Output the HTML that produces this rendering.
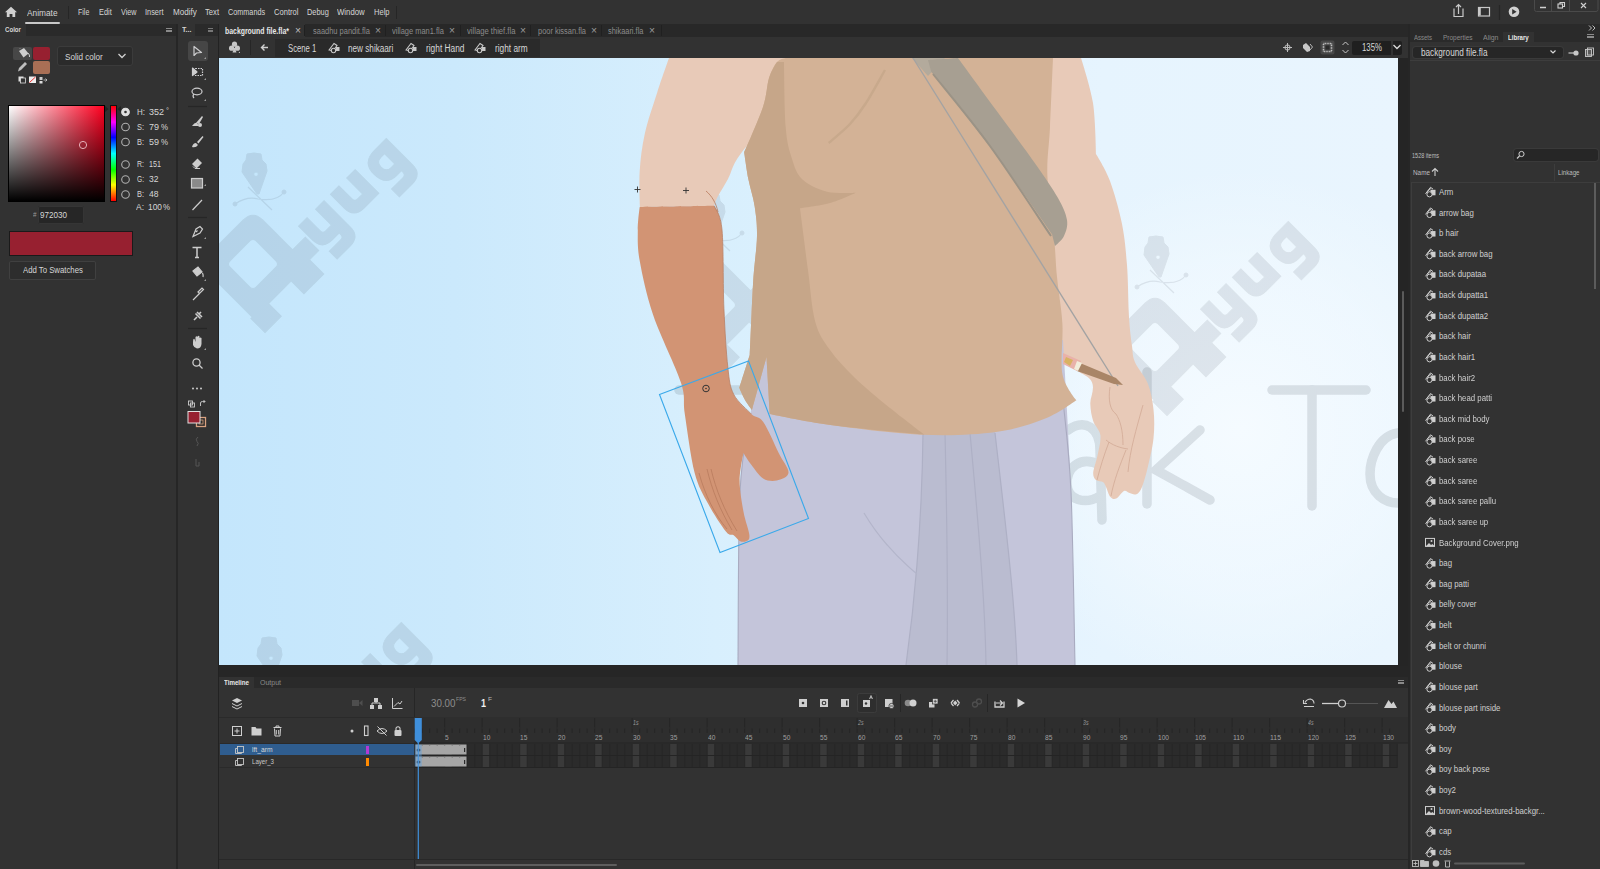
<!DOCTYPE html>
<html><head><meta charset="utf-8">
<style>
html,body{margin:0;padding:0;}
body{width:1600px;height:869px;overflow:hidden;position:relative;background:#323232;font-family:"Liberation Sans",sans-serif;}
.r{position:absolute;}
.t{position:absolute;white-space:nowrap;transform-origin:0 50%;font-family:"Liberation Sans",sans-serif;}
svg{position:absolute;}
</style></head><body>
<div class="r" style="left:0px;top:0px;width:1600px;height:24px;background:#323232;"></div>
<div class="r" style="left:0px;top:24px;width:1600px;height:845px;background:#323232;"></div>
<div class="r" style="left:176px;top:24px;width:2px;height:845px;background:#262626;"></div>
<div class="r" style="left:218px;top:24px;width:1px;height:845px;background:#222;"></div>
<div class="r" style="left:1408px;top:24px;width:2px;height:845px;background:#262626;"></div>
<div class="r" style="left:0px;top:24px;width:176px;height:12px;background:#2a2a2a;"></div>
<div class="r" style="left:0px;top:24px;width:26px;height:12px;background:#323232;"></div>
<div class="r" style="left:178px;top:24px;width:40px;height:12px;background:#2a2a2a;"></div>
<div class="r" style="left:178px;top:24px;width:17px;height:12px;background:#323232;"></div>
<div class="r" style="left:219px;top:24px;width:1189px;height:13px;background:#282828;"></div>
<div class="r" style="left:219px;top:24px;width:86px;height:13px;background:#323232;"></div>
<div class="r" style="left:304px;top:25px;width:1px;height:11px;background:#202020;"></div>
<div class="r" style="left:385px;top:25px;width:1px;height:11px;background:#202020;"></div>
<div class="r" style="left:460px;top:25px;width:1px;height:11px;background:#202020;"></div>
<div class="r" style="left:530px;top:25px;width:1px;height:11px;background:#202020;"></div>
<div class="r" style="left:601px;top:25px;width:1px;height:11px;background:#202020;"></div>
<div class="r" style="left:661px;top:25px;width:1px;height:11px;background:#202020;"></div>
<div class="r" style="left:219px;top:37px;width:1189px;height:21px;background:#323232;"></div>
<div class="r" style="left:275px;top:39px;width:265px;height:18px;background:#2a2a2a;"></div>
<div class="r" style="left:219px;top:58px;width:1189px;height:619px;background:#252525;"></div>
<svg style="left:219px;top:58px" width="1179" height="607" viewBox="219 58 1179 607">
<defs>
<linearGradient id="bg" x1="0" y1="0" x2="1" y2="0">
<stop offset="0" stop-color="#c4e6fc"/>
<stop offset="0.2" stop-color="#cbe9fc"/>
<stop offset="0.42" stop-color="#d8effd"/>
<stop offset="0.75" stop-color="#e6f4fe"/>
<stop offset="1" stop-color="#e9f5fe"/>
</linearGradient>
<radialGradient id="hl" cx="1240" cy="430" r="260" gradientUnits="userSpaceOnUse">
<stop offset="0" stop-color="#f5fbff" stop-opacity="1"/>
<stop offset="0.6" stop-color="#f3faff" stop-opacity="0.6"/>
<stop offset="1" stop-color="#f3faff" stop-opacity="0"/>
</radialGradient>
</defs>
<defs>
<g id="logo">
 <g transform="rotate(-45)">
  <path fill-rule="evenodd" d="M-24 -38 H24 Q38 -38 38 -24 V18 H56 V37 H43 V57 H15 V39 H-17 V57 H-40 V37 H-38 V-24 Q-38 -38 -24 -38 Z M-14 -18.5 H14 Q18.5 -18.5 18.5 -14 V14 Q18.5 18.5 14 18.5 H-14 Q-18.5 18.5 -18.5 14 V-14 Q-18.5 -18.5 -14 -18.5 Z"/>
  <path d="M59 5.5 H71 V24 Q71 28 75 28 H83 V5.5 H95 V43 Q95 56 81 56 H63 V45 H79 Q83 45 83 41 V39 H73 Q59 39 59 25 Z"/>
  <path d="M104 5.5 H116 V24 Q116 28 120 28 H127 V5.5 H139 V39 H118 Q104 39 104 25 Z"/>
  <path fill-rule="evenodd" d="M166 5.5 H183 V43 Q183 56 169 56 H151 V45 H167 Q171 45 171 41 V39 H164 Q149 39 149 22 Q149 5.5 166 5.5 Z M171 15 H166 Q159 15 159 22 Q159 29.5 166 29.5 H171 Z"/>
 </g>
 <path fill-rule="evenodd" d="M-6 -110 Q1 -112 8 -110 L9 -104 L13 -100 L14 -93 L6 -70 H4 L-11 -92 L-10 -100 L-7 -104 Z M3 -92 A2.2 2.2 0 1 0 3.01 -92 Z"/>
 <path fill="none" stroke-width="1.2" d="M-18 -60 Q-6 -68 5 -65 Q24 -62 31 -72 M-5 -77 L19 -54"/>
 <circle cx="-18" cy="-60" r="2"/><circle cx="31" cy="-72" r="2"/>
</g>
</defs>
<rect x="219" y="58" width="1179" height="607" fill="url(#bg)"/>
<rect x="219" y="58" width="1179" height="607" fill="url(#hl)"/>
<g fill="#3c4650" stroke="#3c4650" opacity="0.11">
<use href="#logo" transform="translate(253,264)"/>
<use href="#logo" transform="translate(711,305)"/>
<use href="#logo" transform="translate(1155,347)"/>
<use href="#logo" transform="translate(268,748)"/>
</g>
<g fill="none" stroke="#3c4650" stroke-width="9.5" stroke-linecap="round" opacity="0.14">
  <path d="M1272 390 L1366 390"/>
  <path d="M679 390 L770 390"/>
  <path d="M716 390 L716 506"/>
  <path d="M1312 390 L1312 506"/>
  <path d="M1147 372 L1147 504"/>
  <path d="M1200 430 L1156 470 L1210 500"/>
  <path d="M1398 433 C1378 436 1370 460 1370 474 C1370 494 1385 503 1398 503"/>
  <path d="M1068 430 C1085 418 1100 428 1100 450 L1102 520 M1100 465 C1080 455 1066 468 1067 485 C1068 500 1085 505 1100 496"/>
</g>
<path fill="#e8cab8"  d="M1040.0 58.0 C1040.0 58.0 1081.0 58.0 1081.0 58.0 C1081.0 58.0 1090.5 87.0 1093.0 103.0 C1095.5 119.0 1096.0 154.0 1096.0 154.0 C1096.0 154.0 1105.7 169.3 1110.0 181.0 C1114.3 192.7 1119.2 210.0 1122.0 224.0 C1124.8 238.0 1125.8 249.5 1127.0 265.0 C1128.2 280.5 1128.2 303.5 1129.0 317.0 C1129.8 330.5 1131.0 338.5 1132.0 346.0 C1133.0 353.5 1132.3 355.7 1134.9 362.0 C1137.5 368.3 1144.7 375.7 1147.8 383.6 C1150.9 391.5 1152.5 400.4 1153.5 409.5 C1154.5 418.6 1154.5 428.6 1153.5 438.2 C1152.5 447.8 1149.7 458.9 1147.8 467.0 C1145.9 475.1 1143.9 482.4 1142.0 487.0 C1140.1 491.6 1138.5 493.3 1136.3 494.3 C1134.1 495.3 1131.0 493.4 1129.0 492.8 C1127.0 492.2 1126.1 490.0 1124.0 491.0 C1121.9 492.0 1118.5 497.6 1116.2 498.6 C1113.9 499.6 1112.1 498.9 1110.4 497.0 C1108.7 495.1 1107.2 489.5 1106.0 487.0 C1104.8 484.5 1104.7 483.2 1103.0 482.0 C1101.3 480.8 1097.6 481.6 1096.0 480.0 C1094.4 478.4 1093.0 476.8 1093.2 472.7 C1093.5 468.6 1096.3 461.7 1097.5 455.5 C1098.7 449.3 1101.1 441.1 1100.4 435.3 C1099.7 429.6 1094.9 426.3 1093.2 421.0 C1091.5 415.7 1090.6 410.4 1090.3 403.7 C1090.0 397.0 1095.8 388.6 1091.2 380.7 C1086.7 372.8 1068.5 371.1 1063.0 356.0 C1057.5 340.9 1061.8 307.7 1058.0 290.0 C1054.2 272.3 1040.0 250.0 1040.0 250.0 C1040.0 250.0 1040.0 58.0 1040.0 58.0 Z"/>
<path fill="#e8cab8"  d="M669.0 58.0 C669.0 58.0 800.0 58.0 800.0 58.0 C800.0 58.0 790.0 100.0 790.0 100.0 C790.0 100.0 752.3 138.8 742.0 152.0 C731.7 165.2 732.2 171.3 728.0 179.0 C723.8 186.7 719.3 193.5 717.0 198.0 C714.7 202.5 714.0 206.0 714.0 206.0 C714.0 206.0 640.0 207.0 640.0 207.0 C640.0 207.0 638.9 183.2 639.7 171.0 C640.5 158.8 641.9 146.8 644.8 133.7 C647.7 120.6 653.3 104.9 657.3 92.3 C661.3 79.7 669.0 58.0 669.0 58.0 Z"/>
<path fill="#c4c5da"  d="M767.0 340.0 C767.0 340.0 1063.0 340.0 1063.0 340.0 C1063.0 340.0 1069.0 437.8 1071.0 492.0 C1073.0 546.2 1075.0 665.0 1075.0 665.0 C1075.0 665.0 738.0 665.0 738.0 665.0 C738.0 665.0 738.0 533.5 740.0 492.0 C742.0 450.5 745.5 441.3 750.0 416.0 C754.5 390.7 767.0 340.0 767.0 340.0 Z"/>
<path fill="none" stroke="#a9abc0" stroke-width="1.1"  d="M750.0 416.0 C748.3 428.7 742.0 450.5 740.0 492.0 C738.0 533.5 738.3 636.2 738.0 665.0"/>
<path fill="none" stroke="#a9abc0" stroke-width="1.1"  d="M1063.0 400.0 C1064.3 415.3 1069.0 447.8 1071.0 492.0 C1073.0 536.2 1074.3 636.2 1075.0 665.0"/>
<path fill="#babcd0" d="M923 433 C922 520 915 600 906 665 L1017 665 C1015 600 1005 520 995 432 Z"/>
<g fill="none" stroke="#aeb0c5" stroke-width="1.2">
<path d="M923 433 C922 520 915 600 906 665"/>
<path d="M945 433 C947 520 948 600 947 665"/>
<path d="M970 433 C978 520 985 600 986 665"/>
<path d="M995 433 C1005 520 1015 600 1017 665"/>
<path d="M864 513 C880 540 900 560 917 574" stroke="#b3b5ca"/>
</g>
<path fill="#d3b296"  d="M786.0 58.0 C786.0 58.0 1053.0 58.0 1053.0 58.0 C1053.0 58.0 1050.9 107.3 1050.0 127.0 C1049.1 146.7 1046.7 157.8 1047.4 176.0 C1048.1 194.2 1052.4 219.2 1054.0 236.0 C1055.6 252.8 1055.6 262.3 1057.0 277.0 C1058.4 291.7 1061.5 307.8 1062.4 324.0 C1063.3 340.2 1060.1 361.3 1062.4 374.0 C1064.7 386.7 1076.3 400.2 1076.3 400.2 C1076.3 400.2 1059.3 412.9 1045.9 418.2 C1032.5 423.5 1016.7 429.2 996.0 432.0 C975.3 434.8 949.2 435.9 921.6 434.7 C894.0 433.5 855.8 428.4 830.5 425.0 C805.2 421.6 769.7 414.0 769.7 414.0 C769.7 414.0 766.5 357.0 766.5 357.0 C766.5 357.0 752.0 410.0 752.0 410.0 C752.0 410.0 747.1 403.7 745.0 400.0 C742.9 396.3 739.3 387.8 739.3 387.8 C739.3 387.8 749.8 354.7 749.8 354.7 C749.8 354.7 751.9 302.6 753.1 282.8 C754.3 263.0 756.8 248.8 757.0 236.0 C757.2 223.2 756.0 215.5 754.6 206.0 C753.2 196.5 750.1 188.1 748.4 179.2 C746.7 170.2 744.2 152.3 744.2 152.3 C744.2 152.3 758.9 119.4 763.0 107.0 C767.1 94.6 766.7 85.5 769.0 78.0 C771.3 70.5 774.2 65.3 777.0 62.0 C779.8 58.7 786.0 58.0 786.0 58.0 Z"/>
<path fill="#c6a689"  d="M777.0 62.0 C777.0 62.0 784.0 62.0 784.0 62.0 C784.0 62.0 784.4 111.4 785.7 127.5 C787.0 143.6 789.1 149.9 791.9 158.5 C794.6 167.1 796.4 173.7 802.2 179.2 C808.1 184.7 818.0 189.4 827.0 191.7 C836.0 193.9 856.0 192.7 856.0 192.7 C856.0 192.7 839.3 200.4 830.0 203.0 C820.7 205.6 800.0 208.3 800.0 208.3 C800.0 208.3 805.5 251.1 808.0 270.0 C810.5 288.9 811.6 308.7 815.3 322.0 C819.0 335.3 823.4 340.7 830.0 350.0 C836.6 359.3 845.0 368.3 855.0 378.0 C865.0 387.7 878.4 398.6 890.0 408.0 C901.6 417.4 924.4 434.7 924.4 434.7 C924.4 434.7 856.3 428.4 830.5 425.0 C804.7 421.6 769.7 414.0 769.7 414.0 C769.7 414.0 766.5 357.0 766.5 357.0 C766.5 357.0 752.0 410.0 752.0 410.0 C752.0 410.0 747.1 403.7 745.0 400.0 C742.9 396.3 739.3 387.8 739.3 387.8 C739.3 387.8 749.8 354.7 749.8 354.7 C749.8 354.7 751.9 302.6 753.1 282.8 C754.3 263.0 756.8 248.8 757.0 236.0 C757.2 223.2 756.0 215.5 754.6 206.0 C753.2 196.5 750.1 188.1 748.4 179.2 C746.7 170.2 744.2 152.3 744.2 152.3 C744.2 152.3 758.9 119.4 763.0 107.0 C767.1 94.6 766.7 85.5 769.0 78.0 C771.3 70.5 777.0 62.0 777.0 62.0 Z"/>
<path fill="none" stroke="#c8a98c" stroke-width="2.4"  d="M828.7 143.0 C832.2 139.8 843.8 130.7 850.0 124.0 C856.2 117.3 860.2 112.0 866.0 103.0 C871.8 94.0 881.8 75.5 885.0 70.0"/>
<path fill="#b3aa9c" d="M912 58 L945 58 L928 76 Z"/>
<path fill="#a79f92"  d="M928.0 60.0 C928.0 60.0 958.0 58.0 958.0 58.0 C958.0 58.0 983.1 92.4 996.0 110.0 C1008.9 127.6 1025.0 149.0 1035.3 163.7 C1045.6 178.4 1052.7 188.6 1058.0 198.0 C1063.3 207.4 1066.0 213.7 1067.0 220.0 C1068.0 226.3 1066.0 231.7 1064.0 236.0 C1062.0 240.3 1055.0 246.0 1055.0 246.0 C1055.0 246.0 1052.0 234.0 1052.0 234.0 C1052.0 234.0 1015.3 181.0 1000.0 160.0 C984.7 139.0 971.4 122.7 960.0 108.0 C948.6 93.3 931.4 72.0 931.4 72.0 C931.4 72.0 928.0 60.0 928.0 60.0 Z"/>
<path fill="none" stroke="#9b9386" stroke-width="2"  d="M933.0 74.0 C942.5 86.0 970.3 119.0 990.0 146.0 C1009.7 173.0 1040.8 221.0 1051.0 236.0"/>
<path fill="none" stroke="#a3a3a3" stroke-width="1.4" d="M913 58 L1118 386"/>
<path fill="#a98567" d="M1080 363 L1116 378 L1123 385 L1114 384 L1077 371 Z"/>
<path fill="#e9b2aa" d="M1063 353 L1081 361 L1077 371 L1063 364 Z"/>
<path fill="#d9b262" d="M1066 357 L1073 360 L1070 366 L1064 362 Z"/>
<path fill="#f2eddb" d="M1077 361 L1082 363 L1078 371 L1074 369 Z"/>
<g fill="none" stroke="#d2aa95" stroke-width="0.8">
<path d="M1110 387 C1108 400 1110 410 1116 414 C1120 420 1123 430 1123 445"/>
<path d="M1143 405 C1136 430 1130 450 1128 472"/>
<path d="M1109 442 C1104 455 1100 468 1097 480"/>
<path d="M1126 450 C1120 465 1114 480 1111 496"/>
<path d="M1106 440 C1112 445 1120 448 1128 449"/>
</g>
<path fill="#d29474"  d="M639.7 207.0 C639.7 207.0 714.2 205.8 714.2 205.8 C714.2 205.8 720.4 212.9 722.0 230.0 C723.6 247.1 722.9 285.5 723.9 308.3 C724.9 331.1 726.2 352.6 727.8 367.0 C729.4 381.4 729.8 386.6 733.7 394.4 C737.6 402.2 746.4 409.4 751.3 414.0 C756.2 418.6 758.5 415.3 763.1 421.8 C767.7 428.3 774.5 444.5 778.7 453.0 C782.9 461.5 788.8 468.1 788.5 472.7 C788.2 477.3 781.0 479.5 776.8 480.5 C772.6 481.5 767.4 481.1 763.1 478.5 C758.9 475.9 754.6 469.1 751.3 464.8 C748.0 460.6 743.5 453.0 743.5 453.0 C743.5 453.0 739.6 470.7 739.6 480.5 C739.6 490.3 741.9 502.7 743.5 511.8 C745.1 520.9 749.0 530.4 749.4 535.3 C749.8 540.2 747.6 540.2 746.0 541.2 C744.4 542.2 741.6 542.0 739.6 541.0 C737.6 540.0 736.0 536.9 733.7 535.3 C731.4 533.7 730.1 536.6 725.9 531.4 C721.7 526.2 713.5 513.8 708.3 504.0 C703.1 494.2 698.5 487.7 694.6 472.7 C690.7 457.7 687.1 429.0 684.8 414.0 C682.5 399.0 686.1 398.9 680.9 382.6 C675.7 366.3 660.4 336.3 653.5 316.1 C646.6 295.9 642.4 275.7 639.8 261.3 C637.2 247.0 637.8 239.1 637.8 230.0 C637.8 220.9 639.7 207.0 639.7 207.0 Z"/>
<g fill="none" stroke="#b97b5d" stroke-width="0.8">
<path d="M699 473 C705 495 715 515 727 529"/>
<path d="M707 469 C712 490 720 510 732 530"/>
<path d="M711 469 C716 490 724 510 737 531"/>
<path d="M706 191 C712 196 716 203 718 212"/>
</g>
<path fill="none" stroke="#b98064" stroke-width="0.8"  d="M714.2 206.0 C715.5 210.0 720.4 212.9 722.0 230.0 C723.6 247.1 722.9 285.5 723.9 308.3 C724.9 331.1 726.2 352.6 727.8 367.0 C729.4 381.4 729.8 386.6 733.7 394.4 C737.6 402.2 748.4 410.7 751.3 414.0"/>
<path fill="none" stroke="#3aa9ea" stroke-width="1.1" d="M659.5 394.5 L748.5 361 L808.5 518.5 L720 552.5 Z"/>
<circle cx="706" cy="388.5" r="3.3" fill="none" stroke="#333" stroke-width="1"/><circle cx="706" cy="388.5" r="0.8" fill="#333"/>
<g stroke="#333" stroke-width="0.9"><path d="M634.5 189.5 H640.5 M637.5 186.5 V192.5"/><path d="M683 190.5 H689 M686 187.5 V193.5"/></g>
</svg>
<div class="r" style="left:1402px;top:291px;width:2px;height:121px;background:#5a5a5a;border-radius:1px"></div>
<div class="r" style="left:566px;top:668px;width:315px;height:2px;background:#5a5a5a;border-radius:1px"></div>
<div class="r" style="left:219px;top:666px;width:1189px;height:11px;background:#262626;"></div>
<div class="r" style="left:219px;top:677px;width:1189px;height:11px;background:#2a2a2a;"></div>
<div class="r" style="left:219px;top:677px;width:35px;height:11px;background:#323232;"></div>
<div class="r" style="left:219px;top:688px;width:1189px;height:181px;background:#323232;"></div>
<div class="r" style="left:219px;top:717px;width:1189px;height:1px;background:#2a2a2a;"></div>
<div class="r" style="left:414px;top:688px;width:1px;height:181px;background:#262626;"></div>
<div class="r" style="left:1410px;top:24px;width:190px;height:8px;background:#2a2a2a;"></div>
<div class="r" style="left:1410px;top:32px;width:190px;height:10px;background:#2a2a2a;"></div>
<div class="r" style="left:1503px;top:32px;width:31px;height:10px;background:#323232;"></div>
<div class="r" style="left:1410px;top:60px;width:190px;height:1px;background:#3d3d3d;"></div>
<div class="r" style="left:25px;top:22px;width:35px;height:2px;background:#c8c8c8;border-radius:1px"></div>
<div class="r" style="left:68px;top:6px;width:1px;height:13px;background:#262626;"></div>
<div class="r" style="left:396px;top:6px;width:1px;height:13px;background:#262626;"></div>
<div class="r" style="left:1352px;top:40.6px;width:39px;height:14.6px;background:#1f1f1f;border-radius:2px 0 0 2px"></div>
<div class="r" style="left:1393px;top:40.6px;width:9px;height:14.6px;background:#1f1f1f;border-radius:0 2px 2px 0"></div>
<div class="r" style="left:1412.5px;top:46.5px;width:150.5px;height:11.5px;background:#262626;border-radius:3px;box-shadow:0 0 0 1px #3a3a3a"></div>
<div class="r" style="left:1513.5px;top:149px;width:84px;height:11.7px;background:#262626;border-radius:3px;box-shadow:0 0 0 1px #3a3a3a"></div>
<div class="r" style="left:1554px;top:164px;width:1px;height:17px;background:#3d3d3d;"></div>
<div class="r" style="left:1411px;top:181.5px;width:189px;height:1px;background:#3d3d3d;"></div>
<div class="r" style="left:1411px;top:181.5px;width:1px;height:680px;background:#3d3d3d;"></div>
<div class="r" style="left:1593.5px;top:183px;width:2px;height:106px;background:#5c5c5c;"></div>
<svg style="left:0;top:0" width="1600" height="24" viewBox="0 0 1600 24">
<path fill="#d0d0d0" d="M11 6.8 L17 12.2 H15.2 V17 H12.4 V14 H9.6 V17 H6.8 V12.2 H5 Z"/>
<g fill="none" stroke="#c8c8c8" stroke-width="1.2">
<path d="M1454 8.5 V16.5 H1463 V8.5 M1458.5 14 V5 M1456 7 L1458.5 4.5 L1461 7"/>
<rect x="1478.5" y="7.5" width="11" height="8.5"/>
<path d="M1499.5 5 V20" stroke="#262626"/>
</g>
<rect x="1479" y="8" width="1.8" height="7.5" fill="#c8c8c8"/>
<circle cx="1514" cy="11.8" r="5.3" fill="#d0d0d0"/>
<path d="M1512.2 9 L1516.6 11.8 L1512.2 14.6 Z" fill="#323232"/>
<g fill="none" stroke="#4a4a4a" stroke-width="1"><path d="M1534.5 0 V9.5 Q1534.5 11.5 1536.5 11.5 H1596 Q1598 11.5 1598 9.5 V0 M1551.5 0 V11.5 M1569.5 0 V11.5"/></g>
<g fill="none" stroke="#d0d0d0" stroke-width="1.1">
<path d="M1540 7.5 H1546" stroke-width="1.5"/>
<rect x="1558" y="4" width="4.5" height="4"/><path d="M1560 4 V2.5 H1564.5 V6.5 H1562.5"/>
<path d="M1581 3 L1586 8 M1586 3 L1581 8"/>
</g>
</svg>
<div class="r" style="left:166px;top:28px;width:6px;height:4px;background:repeating-linear-gradient(#8a8a8a 0 1px,transparent 1px 1.5px);"></div>
<div class="r" style="left:13px;top:46.7px;width:19px;height:13.5px;background:#474747;border-radius:2px"></div>
<div class="r" style="left:33.2px;top:47.2px;width:16.8px;height:12.4px;background:#972030;border-radius:2px"></div>
<div class="r" style="left:33.2px;top:61.3px;width:16.8px;height:12.4px;background:#a96f55;border-radius:2px"></div>
<svg style="left:0;top:36px" width="180" height="60" viewBox="0 36 180 60">
<path fill="#cfcfcf" d="M19 51 L24 48 L28.5 53.5 L23.5 57.5 Z"/><path fill="none" stroke="#cfcfcf" stroke-width="1" d="M20.5 49 L20 48.5 M28 53 Q30 55 29.5 57"/>
<path fill="#bdbdbd" d="M18 71.5 L19 68 L25 62 L27 64 L21 70 Z"/>
<rect x="18.5" y="76.5" width="5" height="5" fill="#ddd"/><rect x="20.5" y="78" width="5" height="5" fill="#333" stroke="#ddd" stroke-width="0.8"/>
<rect x="29" y="76.5" width="7" height="6.5" fill="#eee"/><path d="M29.5 82.5 L35.5 77" stroke="#e33" stroke-width="1"/>
<rect x="39.5" y="77" width="3" height="3" fill="#ccc"/><rect x="39.5" y="81" width="3" height="2.5" fill="#ddd"/><path d="M43.5 80 H47 M45.5 78.5 L47 80 L45.5 81.5" stroke="#ccc" fill="none" stroke-width="0.8"/>
</svg>
<div class="r" style="left:57.4px;top:46px;width:75.3px;height:20.4px;background:#2b2b2b;border-radius:3px;box-shadow:inset 0 0 0 1px #3b3b3b"></div>
<svg style="left:117px;top:52px" width="10" height="8"><path d="M1.5 2 L5 5.5 L8.5 2" fill="none" stroke="#d0d0d0" stroke-width="1.3"/></svg>
<div class="r" style="left:8px;top:105px;width:97px;height:97px;background:#000;"></div>
<div class="r" style="left:9px;top:106px;width:95px;height:95px;background:linear-gradient(to bottom, rgba(0,0,0,0), #000), linear-gradient(to right, #fff, #ff0020);"></div>
<svg style="left:77px;top:139px" width="12" height="12"><circle cx="6" cy="6" r="3.6" fill="none" stroke="#e6b0b8" stroke-width="1"/></svg>
<div class="r" style="left:109.5px;top:105px;width:7.5px;height:97px;background:#111;"></div>
<div class="r" style="left:110.5px;top:106px;width:5.5px;height:95px;background:linear-gradient(to bottom,#ff0000,#ff00ff 17%,#0000ff 33%,#00ffff 50%,#00ff00 67%,#ffff00 83%,#ff0000);"></div>
<svg style="left:104px;top:105px" width="18" height="8"><path d="M1 1 L4.5 4 L1 7 Z M17 1 L13.5 4 L17 7 Z" fill="#222"/></svg>
<svg style="left:118px;top:104px" width="16" height="100" viewBox="118 104 16 100">
<g fill="none" stroke="#b0b0b0" stroke-width="1.1">
<circle cx="125.5" cy="112" r="3.8" fill="#e0e0e0" stroke="#e0e0e0"/>
<circle cx="125.5" cy="127" r="3.8"/><circle cx="125.5" cy="142" r="3.8"/>
<circle cx="125.5" cy="164.5" r="3.8"/><circle cx="125.5" cy="179.5" r="3.8"/><circle cx="125.5" cy="194.5" r="3.8"/>
</g><circle cx="125.5" cy="112" r="1.3" fill="#333"/></svg>
<div class="r" style="left:38px;top:206px;width:46px;height:18px;background:#262626;border-radius:2px;box-shadow:inset 0 0 0 1px #353535"></div>
<div class="r" style="left:8.5px;top:230.5px;width:124px;height:25px;background:#972030;box-shadow:inset 0 0 0 1px #1a1a1a"></div>
<div class="r" style="left:9px;top:261px;width:87px;height:19px;background:#2d2d2d;border-radius:2px;box-shadow:inset 0 0 0 1px #404040"></div>
<div class="r" style="left:185px;top:28px;width:5px;height:4px;background:repeating-linear-gradient(#777 0 1px,transparent 1px 1.5px);left:208px"></div>
<div class="r" style="left:188px;top:41px;width:19.5px;height:20px;background:#464646;border-radius:3px"></div>
<svg style="left:178px;top:36px" width="40" height="440" viewBox="178 36 40 440">
<g fill="none" stroke="#cdcdcf" stroke-width="1.2" stroke-linejoin="round">
<path d="M194 46.5 V55.5 L196.5 53 L201.5 52.5 Z"/>
<path d="M192.5 68 L197 72 L192.5 75.5 Z" fill="#cdcdcd"/><rect x="195.5" y="68.5" width="7" height="7" stroke-dasharray="1.5 1"/>
<ellipse cx="197" cy="91.5" rx="5" ry="3.3"/>
<path d="M194 94 Q192 96 194 98"/>
<path d="M188 106.5 H207" stroke="#262626"/>
</g>
<g fill="#cdcdcd">
<path d="M192 126 Q195 122 197 123 L199 126 Z"/><path d="M196 123 L202 116 L203 117 L199 124 Z"/><circle cx="200" cy="125" r="2"/>
<path d="M192 147 Q193 143 196 143 L198 145 Q196 148 192 147 Z M197 142 L202.5 136 L203.5 137 L198.5 143.5 Z"/>
<path d="M192 164 L197.5 158.5 L202 163 L196.5 168.5 Z"/><path d="M193 166.5 L195 168.5 H200" stroke="#cdcdcd" fill="none" stroke-width="1"/>
<rect x="191.5" y="178.5" width="11" height="9.5" fill="#8a8a8a" stroke="#cdcdcd" stroke-width="1.2"/>
</g>
<g fill="none" stroke="#cdcdcd" stroke-width="1.2">
<path d="M192.5 210 L202 200"/>
<path d="M188 217.5 H207" stroke="#262626"/>
<path d="M193 236.5 L196 229 L200 226.5 L202.5 229 L200 233 Z M196 232 L197.5 230.5"/>
<path d="M192.5 247.5 H201.5 M197 247.5 V257.5 M195 257.5 H199" stroke-width="1.5"/>
<path d="M193 271 L198 267 L202 272 L197 276 Z" fill="#cdcdcd"/><path d="M202.5 273 Q203.5 275 203 277"/>
<path d="M193 300 L199.5 293.5 M198 292 L202 288 L203.5 289.5 L199.5 293.5 Z"/>
<path d="M194 320 L197 317 M195.5 313.5 L200.5 318.5 M197 312 L202 317 M199 314 L201 312" stroke-width="1.6"/>
<path d="M188 328.5 H207" stroke="#262626"/>
</g>
<g fill="#cdcdcd">
<path d="M193 342 Q193 338 194.5 339 L195.5 342 V337 Q196.5 335.5 197.5 337 V341 V336.5 Q198.5 335 199.5 336.5 V341 V338 Q200.5 337 201.5 338 V344 Q201 348.5 197 348.5 Q194 348 193 345 Z"/>
</g>
<g fill="none" stroke="#cdcdcd" stroke-width="1.3">
<circle cx="196.5" cy="362.5" r="3.6"/><path d="M199 365 L202.5 368.5"/>
</g>
<g fill="#cdcdcd"><circle cx="193" cy="388.5" r="1"/><circle cx="197" cy="388.5" r="1"/><circle cx="201" cy="388.5" r="1"/></g>
<g fill="none" stroke="#cdcdcd" stroke-width="0.9">
<rect x="188.5" y="401" width="4" height="4"/><rect x="190.5" y="403" width="4" height="4"/>
<path d="M200.5 406 V403 Q200.5 401.5 202.5 401.5 H205 M203.5 400 L205 401.5 L203.5 403"/>
</g>
<rect x="196.5" y="417.5" width="9" height="9" fill="#2a2a2a" stroke="#d9a281" stroke-width="1.3"/>
<rect x="199" y="420" width="4" height="4" fill="none" stroke="#d9a281" stroke-width="0.8"/>
<rect x="188" y="411.5" width="12" height="11.5" fill="#972030" stroke="#e0e0e0" stroke-width="1"/>
<path d="M198 437 Q195 439 197 441.5 Q199.5 443 197 446" fill="none" stroke="#555" stroke-width="1"/>
<path d="M196 459 V466 H199 V462" fill="none" stroke="#555" stroke-width="1"/>
</svg>
<svg style="left:178px;top:36px" width="40" height="440" viewBox="178 36 40 440"><g fill="#9a9a9a">
<path d="M206 59 L206 57 L204 59 Z"/><path d="M206 80 L206 78 L204 80 Z"/><path d="M206 101 L206 99 L204 101 Z"/>
<path d="M206 186 L206 184 L204 186 Z"/><path d="M206 239 L206 237 L204 239 Z"/><path d="M206 281 L206 279 L204 281 Z"/><path d="M206 350 L206 348 L204 350 Z"/>
</g></svg>
<svg style="left:219px;top:37px" width="320" height="21" viewBox="219 37 320 21">
<g fill="#c8c8c8">
<circle cx="234.5" cy="44.2" r="2.6"/><circle cx="231.6" cy="48.2" r="2.6"/><circle cx="237.4" cy="48.2" r="2.6"/>
<path d="M234 48 L235 48 L236.5 52.5 H232.5 Z"/>
<path d="M238.5 53 H240 V51.5 Z"/>
</g>
<path d="M250.5 40 V55" stroke="#262626" stroke-width="1"/>
<path d="M268 47.5 H261.5 M264.5 44.5 L261.5 47.5 L264.5 50.5" fill="none" stroke="#d0d0d0" stroke-width="1.4"/>
<g id="symic" fill="none" stroke="#c8c8c8" stroke-width="1.1">
<path d="M329 50 L334 43.5 L337 45.5 L333 51 Z"/><circle cx="333.5" cy="50.5" r="2.2" fill="#2a2a2a"/><rect x="336" y="47" width="3.5" height="4" fill="#c8c8c8" stroke="none"/>
</g>
<use href="#symic" transform="translate(77,0)"/>
<use href="#symic" transform="translate(146,0)"/>
</svg>
<svg style="left:1270px;top:37px" width="90" height="21" viewBox="1270 37 90 21">
<g fill="none" stroke="#bdbdbd" stroke-width="1">
<circle cx="1287.5" cy="47.5" r="2.6"/><path d="M1283 47.5 H1292 M1287.5 43 V52"/>
</g>
<g fill="#c8c8c8"><path d="M1303 45 L1306 43 L1310 47 L1310 51 L1307 52 L1303 48 Z"/></g>
<path d="M1310 44 L1312.5 47 L1310 50" fill="none" stroke="#c8c8c8" stroke-width="0.9"/>
<rect x="1320.5" y="40.5" width="14" height="14" rx="2" fill="#474747"/>
<rect x="1323.5" y="43.5" width="8" height="8" fill="none" stroke="#c0c0c0" stroke-width="1.6" stroke-dasharray="1 0.6"/>
<rect x="1325.5" y="45.5" width="4" height="4" fill="#2a2a2a"/>
<path d="M1342.5 45 L1345.5 42 L1348.5 45 M1342.5 50 L1345.5 53 L1348.5 50" fill="none" stroke="#c8c8c8" stroke-width="1"/>
<path d="M1394.5 46 L1397.5 49 L1400.5 46" fill="none" stroke="#d8d8d8" stroke-width="1.3" transform="translate(0,0)"/>
</svg>
<svg style="left:1390px;top:40px" width="14" height="14"><path d="M3.5 5 L7 8.5 L10.5 5" fill="none" stroke="#d8d8d8" stroke-width="1.4"/></svg>
<svg style="left:1586px;top:24px" width="14" height="8"><path d="M3 1.5 L5.5 4 L3 6.5 M6.5 1.5 L9 4 L6.5 6.5" fill="none" stroke="#ccc" stroke-width="0.9"/></svg>
<div class="r" style="left:1587px;top:34px;width:7px;height:5px;background:repeating-linear-gradient(#8a8a8a 0 1px,transparent 1px 1.7px);"></div>
<svg style="left:1540px;top:44px" width="60" height="16" viewBox="1540 44 60 16">
<path d="M1550.5 50.5 L1553 53 L1555.5 50.5" fill="none" stroke="#d8d8d8" stroke-width="1.2"/>
<path d="M1568.5 53 H1574" stroke="#c8c8c8" stroke-width="1.2"/><circle cx="1576" cy="53" r="2.6" fill="#c8c8c8"/>
<rect x="1585.5" y="49.5" width="6" height="7" fill="#5a5a5a" stroke="#c8c8c8" stroke-width="0.9"/><rect x="1587.5" y="48" width="6" height="7" fill="none" stroke="#c8c8c8" stroke-width="0.9"/>
</svg>
<svg style="left:1514px;top:149px" width="14" height="12"><circle cx="7.5" cy="5" r="2.6" fill="none" stroke="#ccc" stroke-width="1"/><path d="M5.5 7 L3 9.5" stroke="#ccc" stroke-width="1.2"/></svg>
<svg style="left:1430px;top:166px" width="10" height="12"><path d="M5 10 V3 M2 5.5 L5 2.5 L8 5.5" fill="none" stroke="#ccc" stroke-width="1.1"/></svg>
<svg style="left:1410px;top:180px" width="190" height="689" viewBox="1410 180 190 689">
<defs><g id="libsym">
<path d="M1425.5 1.5 L1430.5 -5 L1433 -3.2" fill="none" stroke="#cfcfcf" stroke-width="1"/>
<path d="M1427 -0.5 L1431 -4" stroke="#cfcfcf" stroke-width="0.9"/>
<rect x="1430.5" y="-2.5" width="5" height="5.5" fill="#cfcfcf"/>
<circle cx="1429.5" cy="2" r="2.6" fill="#323232" stroke="#cfcfcf" stroke-width="1"/>
</g></defs>
<use href="#libsym" transform="translate(0,192.30)"/>
<use href="#libsym" transform="translate(0,212.93)"/>
<use href="#libsym" transform="translate(0,233.55)"/>
<use href="#libsym" transform="translate(0,254.18)"/>
<use href="#libsym" transform="translate(0,274.80)"/>
<use href="#libsym" transform="translate(0,295.43)"/>
<use href="#libsym" transform="translate(0,316.05)"/>
<use href="#libsym" transform="translate(0,336.68)"/>
<use href="#libsym" transform="translate(0,357.30)"/>
<use href="#libsym" transform="translate(0,377.93)"/>
<use href="#libsym" transform="translate(0,398.55)"/>
<use href="#libsym" transform="translate(0,419.18)"/>
<use href="#libsym" transform="translate(0,439.80)"/>
<use href="#libsym" transform="translate(0,460.43)"/>
<use href="#libsym" transform="translate(0,481.05)"/>
<use href="#libsym" transform="translate(0,501.68)"/>
<use href="#libsym" transform="translate(0,522.30)"/>
<g transform="translate(1425,542.92)"><rect x="0.5" y="-4.5" width="9" height="8" fill="none" stroke="#cfcfcf" stroke-width="1"/><path d="M1 3 L4 0 L6 2 L7.5 1 L9.5 3 Z" fill="#cfcfcf"/><circle cx="6.5" cy="-2" r="1" fill="#cfcfcf"/></g>
<use href="#libsym" transform="translate(0,563.55)"/>
<use href="#libsym" transform="translate(0,584.17)"/>
<use href="#libsym" transform="translate(0,604.80)"/>
<use href="#libsym" transform="translate(0,625.42)"/>
<use href="#libsym" transform="translate(0,646.05)"/>
<use href="#libsym" transform="translate(0,666.67)"/>
<use href="#libsym" transform="translate(0,687.30)"/>
<use href="#libsym" transform="translate(0,707.92)"/>
<use href="#libsym" transform="translate(0,728.55)"/>
<use href="#libsym" transform="translate(0,749.17)"/>
<use href="#libsym" transform="translate(0,769.80)"/>
<use href="#libsym" transform="translate(0,790.42)"/>
<g transform="translate(1425,811.05)"><rect x="0.5" y="-4.5" width="9" height="8" fill="none" stroke="#cfcfcf" stroke-width="1"/><path d="M1 3 L4 0 L6 2 L7.5 1 L9.5 3 Z" fill="#cfcfcf"/><circle cx="6.5" cy="-2" r="1" fill="#cfcfcf"/></g>
<use href="#libsym" transform="translate(0,831.67)"/>
<use href="#libsym" transform="translate(0,852.30)"/>
<g fill="none" stroke="#bdbdbd" stroke-width="0.9">
<rect x="1412.5" y="860.5" width="6" height="6"/><path d="M1415.5 861.5 V865.5 M1413.5 863.5 H1417.5"/>
<path d="M1420.5 866.5 V860.5 H1424 L1425 861.5 H1428.5 V866.5 Z" fill="#bdbdbd"/>
<circle cx="1436" cy="863.5" r="3.3" fill="#bdbdbd" stroke="none"/>
<path d="M1444.5 861 H1450.5 M1445.5 861.5 V867 H1449.5 V861.5"/>
</g>
<rect x="1454" y="862.5" width="71" height="2" rx="1" fill="#5c5c5c"/>
</svg>
<div class="r" style="left:1398px;top:680px;width:6px;height:5px;background:repeating-linear-gradient(#8a8a8a 0 1px,transparent 1px 1.7px);"></div>
<svg style="left:219px;top:688px" width="1189" height="181" viewBox="219 688 1189 181">
<g fill="#cfcfcf">
<path d="M237 698 L242 700.5 L237 703 L232 700.5 Z"/>
<path d="M232 703 L237 705.5 L242 703 L242 704 L237 706.5 L232 704 Z"/>
<path d="M232 706 L237 708.5 L242 706 L242 707 L237 709.5 L232 707 Z"/>
</g>
<g fill="#4e4e4e"><rect x="352" y="700" width="7" height="6"/><path d="M359 703 L362.5 700 V706 Z"/></g>
<g fill="none" stroke="#cfcfcf" stroke-width="1">
<rect x="374.5" y="698.5" width="3" height="3" fill="#cfcfcf"/><path d="M376 701.5 V703 M372 706 V703 H380 V706"/><rect x="370.5" y="705.5" width="3" height="3" fill="#cfcfcf"/><rect x="378.5" y="705.5" width="3" height="3" fill="#cfcfcf"/>
<path d="M392.5 698 V708.5 H402.5 M394 706.5 L398 702.5 L400 704 L402 701"/>
</g>
<g fill="none" stroke="#cfcfcf" stroke-width="1">
<rect x="232.5" y="726.5" width="9" height="9"/><path d="M237 728.5 V733.5 M234.5 731 H239.5"/>
</g>
<path d="M251.5 727 H255.5 L256.5 728.5 H261.5 V735.5 H251.5 Z" fill="#cfcfcf"/>
<g fill="none" stroke="#cfcfcf" stroke-width="1"><path d="M273.5 727.5 H281.5 M276 727.5 V726 H279 V727.5 M274.5 728.5 L275 736 H280 L280.5 728.5 M276.3 730 V734.5 M278.7 730 V734.5"/></g>
<circle cx="352" cy="731" r="1.5" fill="#cfcfcf"/>
<rect x="364.5" y="726" width="3.5" height="9.5" fill="none" stroke="#cfcfcf" stroke-width="1.1"/>
<g fill="none" stroke="#cfcfcf" stroke-width="1"><path d="M377 731 Q382 726 387 731 Q382 736 377 731 Z"/><path d="M377.5 726.5 L386.5 735.5"/></g>
<g fill="#cfcfcf"><rect x="394.5" y="730" width="7" height="6" rx="1"/></g><path d="M396 730 V728 Q398 725.5 400 728 V730" fill="none" stroke="#cfcfcf" stroke-width="1.1"/>
<path d="M219.5 743.5 H414 M219.5 767.5 H414" stroke="#2a2a2a"/>
</svg>
<div class="r" style="left:219.5px;top:744px;width:194.5px;height:11px;background:#2f5d8f;"></div>
<div class="r" style="left:365.5px;top:745.5px;width:3.5px;height:8.5px;background:#b23ad6;"></div>
<div class="r" style="left:365.5px;top:757.5px;width:3.5px;height:8.5px;background:#ff8a00;"></div>
<svg style="left:230px;top:744px" width="20" height="24"><g fill="none" stroke="#c8c8c8" stroke-width="0.9"><rect x="7.5" y="2.5" width="6" height="6"/><path d="M7.5 4.5 H5.5 V9.5 H11.5 V8.5"/><rect x="7.5" y="14.5" width="6" height="6"/><path d="M7.5 16.5 H5.5 V21.5 H11.5 V20.5"/></g></svg>
<svg style="left:414px;top:717px" width="994" height="152" viewBox="414 717 994 152">
<rect x="414" y="717" width="994" height="26" fill="#2e2e2e"/>
<rect x="414" y="743.5" width="983.5" height="24" fill="#2b2b2b"/>
<rect x="444.70" y="744" width="7.50" height="23" fill="#3a3a3a"/>
<rect x="482.20" y="744" width="7.50" height="23" fill="#3a3a3a"/>
<rect x="519.70" y="744" width="7.50" height="23" fill="#3a3a3a"/>
<rect x="557.20" y="744" width="7.50" height="23" fill="#3a3a3a"/>
<rect x="594.70" y="744" width="7.50" height="23" fill="#3a3a3a"/>
<rect x="632.20" y="744" width="7.50" height="23" fill="#3a3a3a"/>
<rect x="669.70" y="744" width="7.50" height="23" fill="#3a3a3a"/>
<rect x="707.20" y="744" width="7.50" height="23" fill="#3a3a3a"/>
<rect x="744.70" y="744" width="7.50" height="23" fill="#3a3a3a"/>
<rect x="782.20" y="744" width="7.50" height="23" fill="#3a3a3a"/>
<rect x="819.70" y="744" width="7.50" height="23" fill="#3a3a3a"/>
<rect x="857.20" y="744" width="7.50" height="23" fill="#3a3a3a"/>
<rect x="894.70" y="744" width="7.50" height="23" fill="#3a3a3a"/>
<rect x="932.20" y="744" width="7.50" height="23" fill="#3a3a3a"/>
<rect x="969.70" y="744" width="7.50" height="23" fill="#3a3a3a"/>
<rect x="1007.20" y="744" width="7.50" height="23" fill="#3a3a3a"/>
<rect x="1044.70" y="744" width="7.50" height="23" fill="#3a3a3a"/>
<rect x="1082.20" y="744" width="7.50" height="23" fill="#3a3a3a"/>
<rect x="1119.70" y="744" width="7.50" height="23" fill="#3a3a3a"/>
<rect x="1157.20" y="744" width="7.50" height="23" fill="#3a3a3a"/>
<rect x="1194.70" y="744" width="7.50" height="23" fill="#3a3a3a"/>
<rect x="1232.20" y="744" width="7.50" height="23" fill="#3a3a3a"/>
<rect x="1269.70" y="744" width="7.50" height="23" fill="#3a3a3a"/>
<rect x="1307.20" y="744" width="7.50" height="23" fill="#3a3a3a"/>
<rect x="1344.70" y="744" width="7.50" height="23" fill="#3a3a3a"/>
<rect x="1382.20" y="744" width="7.50" height="23" fill="#3a3a3a"/>
<path d="M414.70 744 V767 M422.20 744 V767 M429.70 744 V767 M437.20 744 V767 M444.70 744 V767 M452.20 744 V767 M459.70 744 V767 M467.20 744 V767 M474.70 744 V767 M482.20 744 V767 M489.70 744 V767 M497.20 744 V767 M504.70 744 V767 M512.20 744 V767 M519.70 744 V767 M527.20 744 V767 M534.70 744 V767 M542.20 744 V767 M549.70 744 V767 M557.20 744 V767 M564.70 744 V767 M572.20 744 V767 M579.70 744 V767 M587.20 744 V767 M594.70 744 V767 M602.20 744 V767 M609.70 744 V767 M617.20 744 V767 M624.70 744 V767 M632.20 744 V767 M639.70 744 V767 M647.20 744 V767 M654.70 744 V767 M662.20 744 V767 M669.70 744 V767 M677.20 744 V767 M684.70 744 V767 M692.20 744 V767 M699.70 744 V767 M707.20 744 V767 M714.70 744 V767 M722.20 744 V767 M729.70 744 V767 M737.20 744 V767 M744.70 744 V767 M752.20 744 V767 M759.70 744 V767 M767.20 744 V767 M774.70 744 V767 M782.20 744 V767 M789.70 744 V767 M797.20 744 V767 M804.70 744 V767 M812.20 744 V767 M819.70 744 V767 M827.20 744 V767 M834.70 744 V767 M842.20 744 V767 M849.70 744 V767 M857.20 744 V767 M864.70 744 V767 M872.20 744 V767 M879.70 744 V767 M887.20 744 V767 M894.70 744 V767 M902.20 744 V767 M909.70 744 V767 M917.20 744 V767 M924.70 744 V767 M932.20 744 V767 M939.70 744 V767 M947.20 744 V767 M954.70 744 V767 M962.20 744 V767 M969.70 744 V767 M977.20 744 V767 M984.70 744 V767 M992.20 744 V767 M999.70 744 V767 M1007.20 744 V767 M1014.70 744 V767 M1022.20 744 V767 M1029.70 744 V767 M1037.20 744 V767 M1044.70 744 V767 M1052.20 744 V767 M1059.70 744 V767 M1067.20 744 V767 M1074.70 744 V767 M1082.20 744 V767 M1089.70 744 V767 M1097.20 744 V767 M1104.70 744 V767 M1112.20 744 V767 M1119.70 744 V767 M1127.20 744 V767 M1134.70 744 V767 M1142.20 744 V767 M1149.70 744 V767 M1157.20 744 V767 M1164.70 744 V767 M1172.20 744 V767 M1179.70 744 V767 M1187.20 744 V767 M1194.70 744 V767 M1202.20 744 V767 M1209.70 744 V767 M1217.20 744 V767 M1224.70 744 V767 M1232.20 744 V767 M1239.70 744 V767 M1247.20 744 V767 M1254.70 744 V767 M1262.20 744 V767 M1269.70 744 V767 M1277.20 744 V767 M1284.70 744 V767 M1292.20 744 V767 M1299.70 744 V767 M1307.20 744 V767 M1314.70 744 V767 M1322.20 744 V767 M1329.70 744 V767 M1337.20 744 V767 M1344.70 744 V767 M1352.20 744 V767 M1359.70 744 V767 M1367.20 744 V767 M1374.70 744 V767 M1382.20 744 V767 M1389.70 744 V767 M1397.20 744 V767" stroke="#262626" stroke-width="0.8"/>
<path d="M414 755.5 H1397.5 M414 767.5 H1397.5 M414 743 H1408" stroke="#242424" stroke-width="1"/>
<path d="M414.70 728.5 V733 M422.20 728.5 V733 M429.70 728.5 V733 M437.20 728.5 V733 M444.70 718 V727.5 M444.70 728.5 V733 M452.20 728.5 V733 M459.70 728.5 V733 M467.20 728.5 V733 M474.70 728.5 V733 M482.20 718 V727.5 M482.20 728.5 V733 M489.70 728.5 V733 M497.20 728.5 V733 M504.70 728.5 V733 M512.20 728.5 V733 M519.70 718 V727.5 M519.70 728.5 V733 M527.20 728.5 V733 M534.70 728.5 V733 M542.20 728.5 V733 M549.70 728.5 V733 M557.20 718 V727.5 M557.20 728.5 V733 M564.70 728.5 V733 M572.20 728.5 V733 M579.70 728.5 V733 M587.20 728.5 V733 M594.70 718 V727.5 M594.70 728.5 V733 M602.20 728.5 V733 M609.70 728.5 V733 M617.20 728.5 V733 M624.70 728.5 V733 M632.20 718 V727.5 M632.20 728.5 V733 M639.70 728.5 V733 M647.20 728.5 V733 M654.70 728.5 V733 M662.20 728.5 V733 M669.70 718 V727.5 M669.70 728.5 V733 M677.20 728.5 V733 M684.70 728.5 V733 M692.20 728.5 V733 M699.70 728.5 V733 M707.20 718 V727.5 M707.20 728.5 V733 M714.70 728.5 V733 M722.20 728.5 V733 M729.70 728.5 V733 M737.20 728.5 V733 M744.70 718 V727.5 M744.70 728.5 V733 M752.20 728.5 V733 M759.70 728.5 V733 M767.20 728.5 V733 M774.70 728.5 V733 M782.20 718 V727.5 M782.20 728.5 V733 M789.70 728.5 V733 M797.20 728.5 V733 M804.70 728.5 V733 M812.20 728.5 V733 M819.70 718 V727.5 M819.70 728.5 V733 M827.20 728.5 V733 M834.70 728.5 V733 M842.20 728.5 V733 M849.70 728.5 V733 M857.20 718 V727.5 M857.20 728.5 V733 M864.70 728.5 V733 M872.20 728.5 V733 M879.70 728.5 V733 M887.20 728.5 V733 M894.70 718 V727.5 M894.70 728.5 V733 M902.20 728.5 V733 M909.70 728.5 V733 M917.20 728.5 V733 M924.70 728.5 V733 M932.20 718 V727.5 M932.20 728.5 V733 M939.70 728.5 V733 M947.20 728.5 V733 M954.70 728.5 V733 M962.20 728.5 V733 M969.70 718 V727.5 M969.70 728.5 V733 M977.20 728.5 V733 M984.70 728.5 V733 M992.20 728.5 V733 M999.70 728.5 V733 M1007.20 718 V727.5 M1007.20 728.5 V733 M1014.70 728.5 V733 M1022.20 728.5 V733 M1029.70 728.5 V733 M1037.20 728.5 V733 M1044.70 718 V727.5 M1044.70 728.5 V733 M1052.20 728.5 V733 M1059.70 728.5 V733 M1067.20 728.5 V733 M1074.70 728.5 V733 M1082.20 718 V727.5 M1082.20 728.5 V733 M1089.70 728.5 V733 M1097.20 728.5 V733 M1104.70 728.5 V733 M1112.20 728.5 V733 M1119.70 718 V727.5 M1119.70 728.5 V733 M1127.20 728.5 V733 M1134.70 728.5 V733 M1142.20 728.5 V733 M1149.70 728.5 V733 M1157.20 718 V727.5 M1157.20 728.5 V733 M1164.70 728.5 V733 M1172.20 728.5 V733 M1179.70 728.5 V733 M1187.20 728.5 V733 M1194.70 718 V727.5 M1194.70 728.5 V733 M1202.20 728.5 V733 M1209.70 728.5 V733 M1217.20 728.5 V733 M1224.70 728.5 V733 M1232.20 718 V727.5 M1232.20 728.5 V733 M1239.70 728.5 V733 M1247.20 728.5 V733 M1254.70 728.5 V733 M1262.20 728.5 V733 M1269.70 718 V727.5 M1269.70 728.5 V733 M1277.20 728.5 V733 M1284.70 728.5 V733 M1292.20 728.5 V733 M1299.70 728.5 V733 M1307.20 718 V727.5 M1307.20 728.5 V733 M1314.70 728.5 V733 M1322.20 728.5 V733 M1329.70 728.5 V733 M1337.20 728.5 V733 M1344.70 718 V727.5 M1344.70 728.5 V733 M1352.20 728.5 V733 M1359.70 728.5 V733 M1367.20 728.5 V733 M1374.70 728.5 V733 M1382.20 718 V727.5 M1382.20 728.5 V733 M1389.70 728.5 V733" stroke="#262626" stroke-width="1"/>
<rect x="415.5" y="744.5" width="51" height="10" fill="#a6a6a6"/>
<rect x="415.5" y="756.5" width="51" height="10" fill="#a6a6a6"/>
<g fill="#2a2a2a"><ellipse cx="418.5" cy="750" rx="2" ry="1.6"/><ellipse cx="418.5" cy="762" rx="2" ry="1.6"/><rect x="464" y="748" width="1.2" height="4"/><rect x="464" y="760" width="1.2" height="4"/></g>
<path d="M422.20 744.5 V746 M422.20 756.5 V758 M429.70 744.5 V746 M429.70 756.5 V758 M437.20 744.5 V746 M437.20 756.5 V758 M444.70 744.5 V746 M444.70 756.5 V758 M452.20 744.5 V746 M452.20 756.5 V758 M459.70 744.5 V746 M459.70 756.5 V758" stroke="#777" stroke-width="0.8"/>
<path d="M414.7 718 H421.8 V740 L418.2 743.5 L414.7 740 Z" fill="#3f8fdb"/>
<rect x="417.7" y="743" width="1.2" height="116" fill="#3f8fdb"/>
<rect x="414.7" y="744.5" width="7" height="22" fill="#5aa0e0" opacity="0.45"/>
</svg>
<div class="r" style="left:219px;top:859px;width:1189px;height:1px;background:#282828;"></div>
<div class="r" style="left:416px;top:863.5px;width:201px;height:2.5px;background:#5e5e5e;border-radius:1px"></div>
<svg style="left:790px;top:690px" width="620" height="26" viewBox="790 690 620 26">
<g fill="#cfcfcf">
<rect x="799" y="699" width="8" height="8"/><rect x="820" y="699" width="8" height="8"/><rect x="841" y="699" width="8" height="8"/>
</g>
<circle cx="803" cy="703" r="1.3" fill="#333"/>
<circle cx="824" cy="703" r="1.8" fill="none" stroke="#333" stroke-width="1.1"/>
<rect x="846" y="700.5" width="1.5" height="5" fill="#333"/>
<rect x="857.5" y="693.5" width="19" height="19" rx="2" fill="#2e2e2e" stroke="#3c3c3c"/>
<rect x="863" y="700" width="7" height="7" fill="#cfcfcf"/><circle cx="866" cy="703.5" r="1.2" fill="#333"/>
<path d="M869.5 699 L871 695.5 L872.5 699 M870 697.8 H872" fill="none" stroke="#cfcfcf" stroke-width="0.8"/>
<rect x="885" y="699" width="7.5" height="8" fill="#cfcfcf"/><circle cx="891.5" cy="706" r="2.6" fill="#cfcfcf" stroke="#323232" stroke-width="0.8"/><path d="M890 706 H893" stroke="#333" stroke-width="0.8"/>
<path d="M900.5 694 V712" stroke="#262626"/>
<circle cx="908" cy="703" r="3.3" fill="#8a8a8a"/><circle cx="913" cy="703" r="3.5" fill="#d0d0d0"/>
<rect x="929" y="702" width="5.5" height="5.5" fill="#cfcfcf"/><rect x="932.5" y="698.5" width="5.5" height="5.5" fill="#cfcfcf" stroke="#323232" stroke-width="0.7"/><path d="M935.2 699.8 V702.8 M933.8 701.3 H936.8" stroke="#333" stroke-width="0.7"/>
<path d="M951 703 L953.5 700 M951 703 L953.5 706 M959.5 703 L957 700 M959.5 703 L957 706" fill="none" stroke="#cfcfcf" stroke-width="1.2"/>
<path d="M955.2 700.5 L957.5 703 L955.2 705.5 L953 703 Z" fill="#cfcfcf"/>
<g fill="none" stroke="#4e4e4e" stroke-width="1.3"><circle cx="975" cy="704.5" r="2.5"/><circle cx="979" cy="701.5" r="2.5"/></g>
<path d="M987.5 694 V712" stroke="#262626"/>
<path d="M995 701.5 V707 H1004 V701.5" fill="none" stroke="#cfcfcf" stroke-width="1.3"/><path d="M996 703 H1002 M1000 700.5 L1002.5 703 L1000 705.5" fill="none" stroke="#cfcfcf" stroke-width="1.2"/>
<path d="M1017.5 698.5 L1025 703 L1017.5 707.5 Z" fill="#d6d6d6"/>
<path d="M1305 702.5 Q1307 699 1310.5 699 Q1314 700 1314 703.5 M1303.5 700 V703.5 H1307" fill="none" stroke="#cfcfcf" stroke-width="1.1"/>
<path d="M1304 706.5 H1314" stroke="#cfcfcf" stroke-width="1"/>
<path d="M1322 703.5 H1338" stroke="#cfcfcf" stroke-width="1.3"/><circle cx="1342" cy="703.5" r="3.5" fill="#323232" stroke="#cfcfcf" stroke-width="1.2"/>
<path d="M1346 703.5 H1378" stroke="#555" stroke-width="1"/>
<path d="M1384 708 L1388.5 700 L1391.5 704 L1393.5 701.5 L1397 708 Z" fill="#cfcfcf"/>
</svg>
<span class="t" style="left:27.00px;top:7.50px;font-size:9px;line-height:10.80px;color:#d6d6d6;font-weight:normal;transform:scaleX(0.9238);">Animate</span>
<span class="t" style="left:78.00px;top:6.10px;font-size:9.5px;line-height:11.40px;color:#d6d6d6;font-weight:normal;transform:scaleX(0.7382);">File</span>
<span class="t" style="left:98.70px;top:6.10px;font-size:9.5px;line-height:11.40px;color:#d6d6d6;font-weight:normal;transform:scaleX(0.7758);">Edit</span>
<span class="t" style="left:120.60px;top:6.10px;font-size:9.5px;line-height:11.40px;color:#d6d6d6;font-weight:normal;transform:scaleX(0.7542);">View</span>
<span class="t" style="left:145.00px;top:6.10px;font-size:9.5px;line-height:11.40px;color:#d6d6d6;font-weight:normal;transform:scaleX(0.7786);">Insert</span>
<span class="t" style="left:172.60px;top:6.10px;font-size:9.5px;line-height:11.40px;color:#d6d6d6;font-weight:normal;transform:scaleX(0.8506);">Modify</span>
<span class="t" style="left:205.00px;top:6.10px;font-size:9.5px;line-height:11.40px;color:#d6d6d6;font-weight:normal;transform:scaleX(0.8035);">Text</span>
<span class="t" style="left:227.90px;top:6.10px;font-size:9.5px;line-height:11.40px;color:#d6d6d6;font-weight:normal;transform:scaleX(0.7638);">Commands</span>
<span class="t" style="left:273.60px;top:6.10px;font-size:9.5px;line-height:11.40px;color:#d6d6d6;font-weight:normal;transform:scaleX(0.7967);">Control</span>
<span class="t" style="left:307.00px;top:6.10px;font-size:9.5px;line-height:11.40px;color:#d6d6d6;font-weight:normal;transform:scaleX(0.7787);">Debug</span>
<span class="t" style="left:337.30px;top:6.10px;font-size:9.5px;line-height:11.40px;color:#d6d6d6;font-weight:normal;transform:scaleX(0.8198);">Window</span>
<span class="t" style="left:373.90px;top:6.10px;font-size:9.5px;line-height:11.40px;color:#d6d6d6;font-weight:normal;transform:scaleX(0.7933);">Help</span>
<span class="t" style="left:5.00px;top:25.00px;font-size:8px;line-height:9.60px;color:#d6d6d6;font-weight:bold;transform:scaleX(0.7660);">Color</span>
<span class="t" style="left:65.20px;top:51.10px;font-size:9.5px;line-height:11.40px;color:#d6d6d6;font-weight:normal;transform:scaleX(0.8522);">Solid color</span>
<span class="t" style="left:137.00px;top:106.60px;font-size:9px;line-height:10.80px;color:#d6d6d6;font-weight:normal;transform:scaleX(0.8889);">H:</span>
<span class="t" style="left:149.00px;top:106.60px;font-size:9px;line-height:10.80px;color:#d6d6d6;font-weight:normal;transform:scaleX(0.9989);">352</span>
<span class="t" style="left:166.00px;top:106.20px;font-size:8px;line-height:9.60px;color:#d6d6d6;font-weight:normal;transform:scaleX(0.9377);">°</span>
<span class="t" style="left:137.00px;top:121.60px;font-size:9px;line-height:10.80px;color:#d6d6d6;font-weight:normal;transform:scaleX(0.8232);">S:</span>
<span class="t" style="left:149.00px;top:121.60px;font-size:9px;line-height:10.80px;color:#d6d6d6;font-weight:normal;transform:scaleX(0.9989);">79</span>
<span class="t" style="left:161.00px;top:122.10px;font-size:9px;line-height:10.80px;color:#d6d6d6;font-weight:normal;transform:scaleX(0.8747);">%</span>
<span class="t" style="left:137.00px;top:136.60px;font-size:9px;line-height:10.80px;color:#d6d6d6;font-weight:normal;transform:scaleX(0.8232);">B:</span>
<span class="t" style="left:149.00px;top:136.60px;font-size:9px;line-height:10.80px;color:#d6d6d6;font-weight:normal;transform:scaleX(0.9989);">59</span>
<span class="t" style="left:161.00px;top:137.10px;font-size:9px;line-height:10.80px;color:#d6d6d6;font-weight:normal;transform:scaleX(0.8747);">%</span>
<span class="t" style="left:137.00px;top:159.10px;font-size:9px;line-height:10.80px;color:#d6d6d6;font-weight:normal;transform:scaleX(0.7778);">R:</span>
<span class="t" style="left:149.00px;top:159.10px;font-size:9px;line-height:10.80px;color:#d6d6d6;font-weight:normal;transform:scaleX(0.7991);">151</span>
<span class="t" style="left:137.00px;top:174.10px;font-size:9px;line-height:10.80px;color:#d6d6d6;font-weight:normal;transform:scaleX(0.7368);">G:</span>
<span class="t" style="left:149.00px;top:174.10px;font-size:9px;line-height:10.80px;color:#d6d6d6;font-weight:normal;transform:scaleX(0.9490);">32</span>
<span class="t" style="left:137.00px;top:189.10px;font-size:9px;line-height:10.80px;color:#d6d6d6;font-weight:normal;transform:scaleX(0.8232);">B:</span>
<span class="t" style="left:149.00px;top:189.10px;font-size:9px;line-height:10.80px;color:#d6d6d6;font-weight:normal;transform:scaleX(0.9490);">48</span>
<span class="t" style="left:136.00px;top:201.60px;font-size:9px;line-height:10.80px;color:#d6d6d6;font-weight:normal;transform:scaleX(0.9408);">A:</span>
<span class="t" style="left:148.00px;top:201.60px;font-size:9px;line-height:10.80px;color:#d6d6d6;font-weight:normal;transform:scaleX(0.9323);">100</span>
<span class="t" style="left:163.00px;top:202.10px;font-size:9px;line-height:10.80px;color:#d6d6d6;font-weight:normal;transform:scaleX(0.8747);">%</span>
<span class="t" style="left:33.00px;top:210.80px;font-size:7px;line-height:8.40px;color:#9a9a9a;font-weight:normal;transform:scaleX(0.8990);">#</span>
<span class="t" style="left:40.00px;top:210.10px;font-size:9px;line-height:10.80px;color:#d6d6d6;font-weight:normal;transform:scaleX(0.8990);">972030</span>
<span class="t" style="left:23.00px;top:264.60px;font-size:9px;line-height:10.80px;color:#d6d6d6;font-weight:normal;transform:scaleX(0.8628);">Add To Swatches</span>
<span class="t" style="left:225.00px;top:26.10px;font-size:8.5px;line-height:10.20px;color:#e8e8e8;font-weight:bold;transform:scaleX(0.8114);">background file.fla*</span>
<span class="t" style="left:312.50px;top:26.10px;font-size:8.5px;line-height:10.20px;color:#8c8c8c;font-weight:normal;transform:scaleX(0.8788);">saadhu pandit.fla</span>
<span class="t" style="left:374.50px;top:25.30px;font-size:10px;line-height:12.00px;color:#9a9a9a;font-weight:normal;transform:scaleX(1.0274);">×</span>
<span class="t" style="left:392.00px;top:26.10px;font-size:8.5px;line-height:10.20px;color:#8c8c8c;font-weight:normal;transform:scaleX(0.8771);">village man1.fla</span>
<span class="t" style="left:449.00px;top:25.30px;font-size:10px;line-height:12.00px;color:#9a9a9a;font-weight:normal;transform:scaleX(1.0274);">×</span>
<span class="t" style="left:466.60px;top:26.10px;font-size:8.5px;line-height:10.20px;color:#8c8c8c;font-weight:normal;transform:scaleX(0.8986);">village thief.fla</span>
<span class="t" style="left:520.00px;top:25.30px;font-size:10px;line-height:12.00px;color:#9a9a9a;font-weight:normal;transform:scaleX(1.0274);">×</span>
<span class="t" style="left:538.00px;top:26.10px;font-size:8.5px;line-height:10.20px;color:#8c8c8c;font-weight:normal;transform:scaleX(0.8758);">poor kissan.fla</span>
<span class="t" style="left:591.00px;top:25.30px;font-size:10px;line-height:12.00px;color:#9a9a9a;font-weight:normal;transform:scaleX(1.0274);">×</span>
<span class="t" style="left:608.40px;top:26.10px;font-size:8.5px;line-height:10.20px;color:#8c8c8c;font-weight:normal;transform:scaleX(0.8713);">shikaari.fla</span>
<span class="t" style="left:649.00px;top:25.30px;font-size:10px;line-height:12.00px;color:#9a9a9a;font-weight:normal;transform:scaleX(1.0274);">×</span>
<span class="t" style="left:294.50px;top:25.30px;font-size:10px;line-height:12.00px;color:#bdbdbd;font-weight:normal;transform:scaleX(1.0274);">×</span>
<span class="t" style="left:288.40px;top:42.50px;font-size:10px;line-height:12.00px;color:#d6d6d6;font-weight:normal;transform:scaleX(0.7685);">Scene 1</span>
<span class="t" style="left:348.40px;top:42.50px;font-size:10px;line-height:12.00px;color:#d6d6d6;font-weight:normal;transform:scaleX(0.8168);">new shikaari</span>
<span class="t" style="left:425.60px;top:42.50px;font-size:10px;line-height:12.00px;color:#d6d6d6;font-weight:normal;transform:scaleX(0.8323);">right Hand</span>
<span class="t" style="left:495.30px;top:42.50px;font-size:10px;line-height:12.00px;color:#d6d6d6;font-weight:normal;transform:scaleX(0.8288);">right arm</span>
<span class="t" style="left:1362.00px;top:42.00px;font-size:10px;line-height:12.00px;color:#d6d6d6;font-weight:normal;transform:scaleX(0.7820);">135%</span>
<span class="t" style="left:1414.00px;top:32.50px;font-size:8px;line-height:9.60px;color:#8a8a8a;font-weight:normal;transform:scaleX(0.7498);">Assets</span>
<span class="t" style="left:1442.50px;top:32.50px;font-size:8px;line-height:9.60px;color:#8a8a8a;font-weight:normal;transform:scaleX(0.8091);">Properties</span>
<span class="t" style="left:1482.50px;top:32.50px;font-size:8px;line-height:9.60px;color:#8a8a8a;font-weight:normal;transform:scaleX(0.8713);">Align</span>
<span class="t" style="left:1508.00px;top:32.50px;font-size:8px;line-height:9.60px;color:#e8e8e8;font-weight:bold;transform:scaleX(0.7632);">Library</span>
<span class="t" style="left:1420.50px;top:46.50px;font-size:10px;line-height:12.00px;color:#d6d6d6;font-weight:normal;transform:scaleX(0.8193);">background file.fla</span>
<span class="t" style="left:1412.00px;top:151.10px;font-size:7.5px;line-height:9.00px;color:#bdbdbd;font-weight:normal;transform:scaleX(0.7360);">1528 items</span>
<span class="t" style="left:1413.00px;top:167.50px;font-size:7.5px;line-height:9.00px;color:#bdbdbd;font-weight:normal;transform:scaleX(0.8497);">Name</span>
<span class="t" style="left:1557.50px;top:167.50px;font-size:7.5px;line-height:9.00px;color:#bdbdbd;font-weight:normal;transform:scaleX(0.8184);">Linkage</span>
<span class="t" style="left:1438.50px;top:186.90px;font-size:9px;line-height:10.80px;color:#cfcfcf;font-weight:normal;transform:scaleX(1.0000);transform:scaleX(0.87)">Arm</span>
<span class="t" style="left:1438.50px;top:207.53px;font-size:9px;line-height:10.80px;color:#cfcfcf;font-weight:normal;transform:scaleX(1.0000);transform:scaleX(0.87)">arrow bag</span>
<span class="t" style="left:1438.50px;top:228.15px;font-size:9px;line-height:10.80px;color:#cfcfcf;font-weight:normal;transform:scaleX(1.0000);transform:scaleX(0.87)">b hair</span>
<span class="t" style="left:1438.50px;top:248.78px;font-size:9px;line-height:10.80px;color:#cfcfcf;font-weight:normal;transform:scaleX(1.0000);transform:scaleX(0.87)">back arrow bag</span>
<span class="t" style="left:1438.50px;top:269.40px;font-size:9px;line-height:10.80px;color:#cfcfcf;font-weight:normal;transform:scaleX(1.0000);transform:scaleX(0.87)">back dupataa</span>
<span class="t" style="left:1438.50px;top:290.03px;font-size:9px;line-height:10.80px;color:#cfcfcf;font-weight:normal;transform:scaleX(1.0000);transform:scaleX(0.87)">back dupatta1</span>
<span class="t" style="left:1438.50px;top:310.65px;font-size:9px;line-height:10.80px;color:#cfcfcf;font-weight:normal;transform:scaleX(1.0000);transform:scaleX(0.87)">back dupatta2</span>
<span class="t" style="left:1438.50px;top:331.28px;font-size:9px;line-height:10.80px;color:#cfcfcf;font-weight:normal;transform:scaleX(1.0000);transform:scaleX(0.87)">back hair</span>
<span class="t" style="left:1438.50px;top:351.90px;font-size:9px;line-height:10.80px;color:#cfcfcf;font-weight:normal;transform:scaleX(1.0000);transform:scaleX(0.87)">back hair1</span>
<span class="t" style="left:1438.50px;top:372.53px;font-size:9px;line-height:10.80px;color:#cfcfcf;font-weight:normal;transform:scaleX(1.0000);transform:scaleX(0.87)">back hair2</span>
<span class="t" style="left:1438.50px;top:393.15px;font-size:9px;line-height:10.80px;color:#cfcfcf;font-weight:normal;transform:scaleX(1.0000);transform:scaleX(0.87)">back head patti</span>
<span class="t" style="left:1438.50px;top:413.78px;font-size:9px;line-height:10.80px;color:#cfcfcf;font-weight:normal;transform:scaleX(1.0000);transform:scaleX(0.87)">back mid body</span>
<span class="t" style="left:1438.50px;top:434.40px;font-size:9px;line-height:10.80px;color:#cfcfcf;font-weight:normal;transform:scaleX(1.0000);transform:scaleX(0.87)">back pose</span>
<span class="t" style="left:1438.50px;top:455.03px;font-size:9px;line-height:10.80px;color:#cfcfcf;font-weight:normal;transform:scaleX(1.0000);transform:scaleX(0.87)">back saree</span>
<span class="t" style="left:1438.50px;top:475.65px;font-size:9px;line-height:10.80px;color:#cfcfcf;font-weight:normal;transform:scaleX(1.0000);transform:scaleX(0.87)">back saree</span>
<span class="t" style="left:1438.50px;top:496.28px;font-size:9px;line-height:10.80px;color:#cfcfcf;font-weight:normal;transform:scaleX(1.0000);transform:scaleX(0.87)">back saree pallu</span>
<span class="t" style="left:1438.50px;top:516.90px;font-size:9px;line-height:10.80px;color:#cfcfcf;font-weight:normal;transform:scaleX(1.0000);transform:scaleX(0.87)">back saree up</span>
<span class="t" style="left:1438.50px;top:537.52px;font-size:9px;line-height:10.80px;color:#cfcfcf;font-weight:normal;transform:scaleX(1.0000);transform:scaleX(0.87)">Background Cover.png</span>
<span class="t" style="left:1438.50px;top:558.15px;font-size:9px;line-height:10.80px;color:#cfcfcf;font-weight:normal;transform:scaleX(1.0000);transform:scaleX(0.87)">bag</span>
<span class="t" style="left:1438.50px;top:578.77px;font-size:9px;line-height:10.80px;color:#cfcfcf;font-weight:normal;transform:scaleX(1.0000);transform:scaleX(0.87)">bag patti</span>
<span class="t" style="left:1438.50px;top:599.40px;font-size:9px;line-height:10.80px;color:#cfcfcf;font-weight:normal;transform:scaleX(1.0000);transform:scaleX(0.87)">belly cover</span>
<span class="t" style="left:1438.50px;top:620.02px;font-size:9px;line-height:10.80px;color:#cfcfcf;font-weight:normal;transform:scaleX(1.0000);transform:scaleX(0.87)">belt</span>
<span class="t" style="left:1438.50px;top:640.65px;font-size:9px;line-height:10.80px;color:#cfcfcf;font-weight:normal;transform:scaleX(1.0000);transform:scaleX(0.87)">belt or chunni</span>
<span class="t" style="left:1438.50px;top:661.27px;font-size:9px;line-height:10.80px;color:#cfcfcf;font-weight:normal;transform:scaleX(1.0000);transform:scaleX(0.87)">blouse</span>
<span class="t" style="left:1438.50px;top:681.90px;font-size:9px;line-height:10.80px;color:#cfcfcf;font-weight:normal;transform:scaleX(1.0000);transform:scaleX(0.87)">blouse part</span>
<span class="t" style="left:1438.50px;top:702.52px;font-size:9px;line-height:10.80px;color:#cfcfcf;font-weight:normal;transform:scaleX(1.0000);transform:scaleX(0.87)">blouse part inside</span>
<span class="t" style="left:1438.50px;top:723.15px;font-size:9px;line-height:10.80px;color:#cfcfcf;font-weight:normal;transform:scaleX(1.0000);transform:scaleX(0.87)">body</span>
<span class="t" style="left:1438.50px;top:743.77px;font-size:9px;line-height:10.80px;color:#cfcfcf;font-weight:normal;transform:scaleX(1.0000);transform:scaleX(0.87)">boy</span>
<span class="t" style="left:1438.50px;top:764.40px;font-size:9px;line-height:10.80px;color:#cfcfcf;font-weight:normal;transform:scaleX(1.0000);transform:scaleX(0.87)">boy back pose</span>
<span class="t" style="left:1438.50px;top:785.02px;font-size:9px;line-height:10.80px;color:#cfcfcf;font-weight:normal;transform:scaleX(1.0000);transform:scaleX(0.87)">boy2</span>
<span class="t" style="left:1438.50px;top:805.65px;font-size:9px;line-height:10.80px;color:#cfcfcf;font-weight:normal;transform:scaleX(1.0000);transform:scaleX(0.87)">brown-wood-textured-backgr...</span>
<span class="t" style="left:1438.50px;top:826.27px;font-size:9px;line-height:10.80px;color:#cfcfcf;font-weight:normal;transform:scaleX(1.0000);transform:scaleX(0.87)">cap</span>
<span class="t" style="left:1438.50px;top:846.90px;font-size:9px;line-height:10.80px;color:#cfcfcf;font-weight:normal;transform:scaleX(1.0000);transform:scaleX(0.87)">cds</span>
<span class="t" style="left:224.00px;top:677.80px;font-size:7.5px;line-height:9.00px;color:#e8e8e8;font-weight:bold;transform:scaleX(0.8254);">Timeline</span>
<span class="t" style="left:259.50px;top:677.80px;font-size:7.5px;line-height:9.00px;color:#8a8a8a;font-weight:normal;transform:scaleX(0.9327);">Output</span>
<span class="t" style="left:431.00px;top:696.70px;font-size:10.5px;line-height:12.60px;color:#8d8d8d;font-weight:normal;transform:scaleX(0.9324);">30.00</span>
<span class="t" style="left:455.50px;top:695.70px;font-size:5.5px;line-height:6.60px;color:#8d8d8d;font-weight:normal;transform:scaleX(0.9349);">FPS</span>
<span class="t" style="left:480.50px;top:697.00px;font-size:10.5px;line-height:12.60px;color:#f0f0f0;font-weight:bold;transform:scaleX(0.8562);">1</span>
<span class="t" style="left:488.00px;top:695.90px;font-size:6px;line-height:7.20px;color:#bbbbbb;font-weight:normal;transform:scaleX(1.0914);">F</span>
<span class="t" style="left:252.00px;top:745.00px;font-size:8px;line-height:9.60px;color:#d8d8d8;font-weight:normal;transform:scaleX(0.8385);">lft_arm</span>
<span class="t" style="left:252.00px;top:757.00px;font-size:8px;line-height:9.60px;color:#c8c8c8;font-weight:normal;transform:scaleX(0.7610);">Layer_3</span>
<span class="t" style="left:182.00px;top:25.00px;font-size:8px;line-height:9.60px;color:#d6d6d6;font-weight:bold;transform:scaleX(0.8905);">T...</span>
<span class="t" style="left:445.30px;top:732.50px;font-size:8px;line-height:9.60px;color:#a0a0a0;font-weight:normal;transform:scaleX(0.8204);">5</span>
<span class="t" style="left:482.80px;top:732.50px;font-size:8px;line-height:9.60px;color:#a0a0a0;font-weight:normal;transform:scaleX(0.8204);">10</span>
<span class="t" style="left:520.30px;top:732.50px;font-size:8px;line-height:9.60px;color:#a0a0a0;font-weight:normal;transform:scaleX(0.8204);">15</span>
<span class="t" style="left:557.80px;top:732.50px;font-size:8px;line-height:9.60px;color:#a0a0a0;font-weight:normal;transform:scaleX(0.8204);">20</span>
<span class="t" style="left:595.30px;top:732.50px;font-size:8px;line-height:9.60px;color:#a0a0a0;font-weight:normal;transform:scaleX(0.8204);">25</span>
<span class="t" style="left:632.80px;top:732.50px;font-size:8px;line-height:9.60px;color:#a0a0a0;font-weight:normal;transform:scaleX(0.8204);">30</span>
<span class="t" style="left:670.30px;top:732.50px;font-size:8px;line-height:9.60px;color:#a0a0a0;font-weight:normal;transform:scaleX(0.8204);">35</span>
<span class="t" style="left:707.80px;top:732.50px;font-size:8px;line-height:9.60px;color:#a0a0a0;font-weight:normal;transform:scaleX(0.8204);">40</span>
<span class="t" style="left:745.30px;top:732.50px;font-size:8px;line-height:9.60px;color:#a0a0a0;font-weight:normal;transform:scaleX(0.8204);">45</span>
<span class="t" style="left:782.80px;top:732.50px;font-size:8px;line-height:9.60px;color:#a0a0a0;font-weight:normal;transform:scaleX(0.8204);">50</span>
<span class="t" style="left:820.30px;top:732.50px;font-size:8px;line-height:9.60px;color:#a0a0a0;font-weight:normal;transform:scaleX(0.8204);">55</span>
<span class="t" style="left:857.80px;top:732.50px;font-size:8px;line-height:9.60px;color:#a0a0a0;font-weight:normal;transform:scaleX(0.8204);">60</span>
<span class="t" style="left:895.30px;top:732.50px;font-size:8px;line-height:9.60px;color:#a0a0a0;font-weight:normal;transform:scaleX(0.8204);">65</span>
<span class="t" style="left:932.80px;top:732.50px;font-size:8px;line-height:9.60px;color:#a0a0a0;font-weight:normal;transform:scaleX(0.8204);">70</span>
<span class="t" style="left:970.30px;top:732.50px;font-size:8px;line-height:9.60px;color:#a0a0a0;font-weight:normal;transform:scaleX(0.8204);">75</span>
<span class="t" style="left:1007.80px;top:732.50px;font-size:8px;line-height:9.60px;color:#a0a0a0;font-weight:normal;transform:scaleX(0.8204);">80</span>
<span class="t" style="left:1045.30px;top:732.50px;font-size:8px;line-height:9.60px;color:#a0a0a0;font-weight:normal;transform:scaleX(0.8204);">85</span>
<span class="t" style="left:1082.80px;top:732.50px;font-size:8px;line-height:9.60px;color:#a0a0a0;font-weight:normal;transform:scaleX(0.8204);">90</span>
<span class="t" style="left:1120.30px;top:732.50px;font-size:8px;line-height:9.60px;color:#a0a0a0;font-weight:normal;transform:scaleX(0.8204);">95</span>
<span class="t" style="left:1157.80px;top:732.50px;font-size:8px;line-height:9.60px;color:#a0a0a0;font-weight:normal;transform:scaleX(0.8204);">100</span>
<span class="t" style="left:1195.30px;top:732.50px;font-size:8px;line-height:9.60px;color:#a0a0a0;font-weight:normal;transform:scaleX(0.8204);">105</span>
<span class="t" style="left:1232.80px;top:732.50px;font-size:8px;line-height:9.60px;color:#a0a0a0;font-weight:normal;transform:scaleX(0.8586);">110</span>
<span class="t" style="left:1270.30px;top:732.50px;font-size:8px;line-height:9.60px;color:#a0a0a0;font-weight:normal;transform:scaleX(0.8586);">115</span>
<span class="t" style="left:1307.80px;top:732.50px;font-size:8px;line-height:9.60px;color:#a0a0a0;font-weight:normal;transform:scaleX(0.8204);">120</span>
<span class="t" style="left:1345.30px;top:732.50px;font-size:8px;line-height:9.60px;color:#a0a0a0;font-weight:normal;transform:scaleX(0.8204);">125</span>
<span class="t" style="left:1382.80px;top:732.50px;font-size:8px;line-height:9.60px;color:#a0a0a0;font-weight:normal;transform:scaleX(0.8204);">130</span>
<span class="t" style="left:633.00px;top:718.60px;font-size:7px;line-height:8.40px;color:#999;font-weight:normal;transform:scaleX(0.7439);font-style:italic">1s</span>
<span class="t" style="left:858.00px;top:718.60px;font-size:7px;line-height:8.40px;color:#999;font-weight:normal;transform:scaleX(0.7439);font-style:italic">2s</span>
<span class="t" style="left:1083.00px;top:718.60px;font-size:7px;line-height:8.40px;color:#999;font-weight:normal;transform:scaleX(0.7439);font-style:italic">3s</span>
<span class="t" style="left:1308.00px;top:718.60px;font-size:7px;line-height:8.40px;color:#999;font-weight:normal;transform:scaleX(0.7439);font-style:italic">4s</span>
</body></html>
